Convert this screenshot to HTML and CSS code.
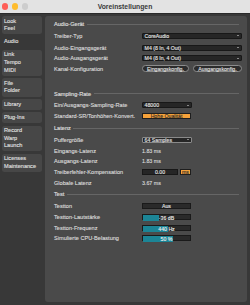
FILE: index.html
```html
<!DOCTYPE html>
<html lang="de">
<head>
<meta charset="utf-8">
<title>Voreinstellungen</title>
<link rel="stylesheet" href="styles.css">
</head>
<body>
<div class="window">
  <header class="titlebar">
    <div class="lights">
      <span class="light red"></span>
      <span class="light yellow"></span>
      <span class="light gray"></span>
    </div>
    <div class="title">Voreinstellungen</div>
    <div class="spacer"></div>
  </header>
  <div class="content">
    <nav class="sidebar">
      <div class="tab"><div>Look</div><div>Feel</div></div>
      <div class="tab active"><div>Audio</div></div>
      <div class="tab"><div>Link</div><div>Tempo</div><div>MIDI</div></div>
      <div class="tab"><div>File</div><div>Folder</div></div>
      <div class="tab"><div>Library</div></div>
      <div class="tab"><div>Plug-Ins</div></div>
      <div class="tab"><div>Record</div><div>Warp</div><div>Launch</div></div>
      <div class="tab"><div>Licenses</div><div>Maintenance</div></div>
    </nav>
    <main class="panel">
      <section class="sec sec-first">
        <div class="sec-head"><span>Audio-Gerät</span><i class="rule"></i></div>
        <div class="row row-sep"><span class="label">Treiber-Typ</span><div class="dropdown wide"><span>CoreAudio</span><i class="arrow"></i></div></div>
        <div class="row"><span class="label">Audio-Eingangsgerät</span><div class="dropdown wide"><span>M4 (8 In, 4 Out)</span><i class="arrow"></i></div></div>
        <div class="row"><span class="label">Audio-Ausgangsgerät</span><div class="dropdown wide"><span>M4 (8 In, 4 Out)</span><i class="arrow"></i></div></div>
        <div class="row"><span class="label">Kanal-Konfiguration</span>
          <div class="buttons"><span class="pill pill-in">Eingangskonfig.</span><span class="pill pill-out">Ausgangskonfig.</span></div>
        </div>
      </section>
      <section class="sec sec-sampling">
        <div class="sec-head"><span>Sampling-Rate</span><i class="rule"></i></div>
        <div class="row"><span class="label">Ein/Ausgangs-Sampling-Rate</span><div class="dropdown narrow"><span>48000</span><i class="arrow"></i></div></div>
        <div class="row"><span class="label">Standard-SR/Tonhöhen-Konvert.</span><div class="toggle-on">Hohe Qualität</div></div>
      </section>
      <section class="sec">
        <div class="sec-head"><span>Latenz</span><i class="rule"></i></div>
        <div class="row"><span class="label">Puffergröße</span><div class="dropdown narrow focus"><span>64 Samples</span><i class="arrow"></i></div></div>
        <div class="row"><span class="label">Eingangs-Latenz</span><span class="value">1.83 ms</span></div>
        <div class="row"><span class="label">Ausgangs-Latenz</span><span class="value">1.83 ms</span></div>
        <div class="row"><span class="label">Treiberfehler-Kompensation</span>
          <div class="comp"><span class="field">0.00</span><span class="unit">ms</span></div>
        </div>
        <div class="row"><span class="label">Globale Latenz</span><span class="value">3.67 ms</span></div>
      </section>
      <section class="sec">
        <div class="sec-head"><span>Test</span><i class="rule"></i></div>
        <div class="row"><span class="label">Testton</span><div class="box">Aus</div></div>
        <div class="row"><span class="label">Testton-Lautstärke</span><div class="slider"><i class="fill" style="width:33%"></i><span>-36 dB</span></div></div>
        <div class="row"><span class="label">Testton-Frequenz</span><div class="slider"><i class="fill" style="width:54%"></i><span>440 Hz</span></div></div>
        <div class="row"><span class="label">Simulierte CPU-Belastung</span><div class="slider"><i class="fill" style="width:63%"></i><span>50 %</span></div></div>
      </section>
    </main>
  </div>
</div>
</body>
</html>
```
FILE: styles.css
```css
* { box-sizing: border-box; margin: 0; padding: 0; }
html, body { width: 250px; height: 305px; overflow: hidden; }
body {
  background: #383838;
  font-family: "Liberation Sans", Arial, sans-serif;
  font-size: 5.6px;
  color: #dcdcdc;
  -webkit-text-stroke: 0.12px currentColor;
}
.window { display: flex; flex-direction: column; height: 305px; }

.titlebar {
  height: 14px;
  background: #e3e3e3;
  display: grid;
  grid-template-columns: 1fr auto 1fr;
  align-items: center;
  border-bottom: 0.5px solid #2a2a2a;
}
.lights { display: flex; gap: 3.6px; padding-left: 2.2px; }
.light { width: 6.2px; height: 6.2px; border-radius: 50%; display: block; }
.red { background: #fe5f57; }
.yellow { background: #febc2e; }
.gray { background: #cdcdcd; }
.title { font-weight: bold; font-size: 6.8px; color: #3a3a3a; -webkit-text-stroke: 0; }

.content {
  flex: 1;
  display: flex;
  gap: 3px;
  padding: 2px 3px 3px 2px;
}
.sidebar {
  width: 40px;
  display: flex;
  flex-direction: column;
  gap: 2.6px;
}
.tab {
  background: #474747;
  border-radius: 2.5px;
  padding: 1.5px 2px;
  line-height: 7.6px;
  color: #e0e0e0;
}
.tab.active { background: transparent; }

.panel {
  flex: 1;
  background: #4a4a4a;
  border-radius: 3px;
  padding: 3px 5px 0 9px;
}
.sec { margin-top: 1.5px; }
.sec-first { margin-top: 0; }
.sec-sampling { margin-top: 14.4px; }
.sec-head {
  height: 10px;
  display: flex;
  align-items: center;
  gap: 2.5px;
  margin-bottom: 1.5px;
  color: #e0e0e0;
}
.rule { flex: 1; height: 0.6px; background: #666666; margin-right: 3.5px; }

.row {
  height: 10.7px;
  display: grid;
  grid-template-columns: 88px 1fr;
  align-items: center;
  white-space: nowrap;
}
.row-sep { margin-bottom: 1px; }
.label { color: #dcdcdc; }
.value { color: #d8d8d8; font-size: 5.3px; }

.dropdown {
  height: 6px;
  background: #262626;
  border: 0.5px solid #181818;
  border-radius: 1px;
  display: flex;
  align-items: center;
  justify-content: space-between;
  padding: 0 2.5px 0 1.6px;
  font-size: 5.2px;
  color: #e4e4e4;
}
.dropdown.wide { width: 100px; }
.dropdown.narrow { width: 50px; }
.dropdown.focus { border-color: #8a8a8a; height: 6.6px; }
.arrow {
  width: 0; height: 0;
  border-left: 1.4px solid transparent;
  border-right: 1.4px solid transparent;
  border-top: 1.8px solid #e8e8e8;
}

.buttons { display: flex; gap: 4px; }
.pill {
  height: 7px;
  border: 0.6px solid #8c8c8c;
  background: #2c2c2c;
  border-radius: 3.5px;
  display: flex;
  align-items: center;
  justify-content: center;
  font-size: 5.2px;
  color: #e4e4e4;
}
.pill-in { width: 47px; }
.pill-out { width: 49px; }

.toggle-on {
  width: 49px;
  height: 6.6px;
  background: #f6a23a;
  border: 0.5px solid #1e1e1e;
  display: flex;
  align-items: center;
  justify-content: center;
  font-size: 5.2px;
  color: #2a2a2a;
}

.comp { display: flex; gap: 1.5px; }
.field {
  width: 36px;
  height: 6.4px;
  background: #262626;
  border: 0.5px solid #181818;
  display: flex;
  align-items: center;
  justify-content: center;
  font-size: 5.2px;
  color: #e4e4e4;
}
.unit {
  width: 11.7px;
  height: 6.4px;
  background: #f6a23a;
  border: 0.5px solid #1e1e1e;
  display: flex;
  align-items: center;
  justify-content: center;
  font-size: 5.2px;
  color: #2a2a2a;
}

.box {
  width: 49px;
  height: 6px;
  background: #2a2a2a;
  border: 0.5px solid #1a1a1a;
  display: flex;
  align-items: center;
  justify-content: center;
  font-size: 5.2px;
  color: #e4e4e4;
}
.slider {
  width: 49px;
  height: 6px;
  background: #2a2a2a;
  border: 0.5px solid #1a1a1a;
  display: grid;
  align-items: center;
  justify-items: center;
  font-size: 5.2px;
  color: #eeeeee;
}
.slider > * { grid-area: 1 / 1; }
.fill { justify-self: start; height: 100%; background: #1c8596; }
.slider span { z-index: 1; }
```
